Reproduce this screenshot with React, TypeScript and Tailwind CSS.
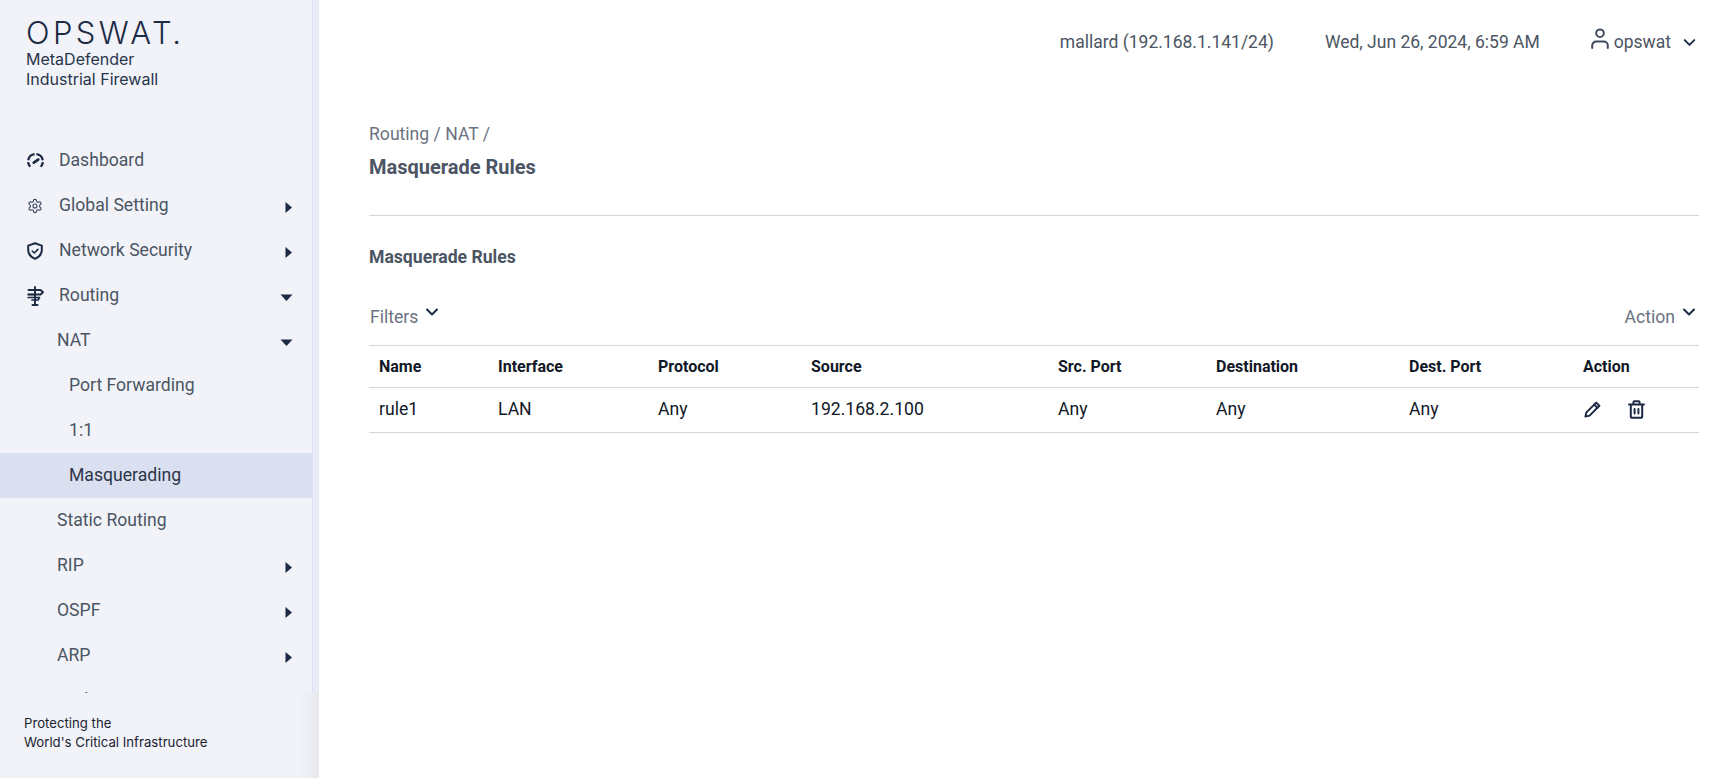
import { ChevronDown } from 'lucide-react';

const sideFont = "font-['Inter','Liberation_Sans',sans-serif]";

function CaretRight() {
    return (
        <svg width="9" height="13" viewBox="0 0 9 13" className="mt-[3px] fill-[#1d2b45]">
            <path d="M1.5 1l6.5 5.5L1.5 12z" />
        </svg>
    );
}

function CaretDown() {
    return (
        <svg width="13" height="9" viewBox="0 0 13 9" className="mt-[4px] fill-[#1d2b45]">
            <path d="M.5 1.5h12L6.5 8z" />
        </svg>
    );
}

function GaugeIcon() {
    return (
        <svg width="17" height="16" viewBox="0 0 17 16" fill="none" stroke="#1d2b45" strokeWidth="2.3">
            <path d="M3.27 13.73A7.4 7.4 0 0 1 1.13 9.14M1.21 7.2A7.4 7.4 0 0 1 7.6 1.15M9.4 1.15A7.4 7.4 0 0 1 15.79 7.2M15.87 9.14A7.4 7.4 0 0 1 13.73 13.73" />
            <path d="M6.8 9.6l4.4-3" strokeWidth="2.8" strokeLinecap="round" />
        </svg>
    );
}

function GearIcon() {
    return (
        <svg width="16" height="16" viewBox="0 0 24 24" fill="none" stroke="#3a4660" strokeWidth="1.7" strokeLinejoin="round">
            <path d="M12.2 2h-.44a2 2 0 0 0-2 2v.18a2 2 0 0 1-1 1.73l-.43.25a2 2 0 0 1-2 0l-.15-.08a2 2 0 0 0-2.73.73l-.22.38a2 2 0 0 0 .73 2.73l.15.1a2 2 0 0 1 1 1.72v.51a2 2 0 0 1-1 1.74l-.15.09a2 2 0 0 0-.73 2.73l.22.38a2 2 0 0 0 2.73.73l.15-.08a2 2 0 0 1 2 0l.43.25a2 2 0 0 1 1 1.73V20a2 2 0 0 0 2 2h.44a2 2 0 0 0 2-2v-.18a2 2 0 0 1 1-1.73l.43-.25a2 2 0 0 1 2 0l.15.08a2 2 0 0 0 2.73-.73l.22-.39a2 2 0 0 0-.73-2.73l-.15-.08a2 2 0 0 1-1-1.74v-.5a2 2 0 0 1 1-1.74l.15-.09a2 2 0 0 0 .73-2.73l-.22-.38a2 2 0 0 0-2.73-.73l-.15.08a2 2 0 0 1-2 0l-.43-.25a2 2 0 0 1-1-1.73V4a2 2 0 0 0-2-2z" />
            <circle cx="12" cy="12" r="3" />
        </svg>
    );
}

function ShieldIcon() {
    return (
        <svg width="16" height="18" viewBox="0 0 16 18" fill="none" stroke="#1d2b45" strokeWidth="2" strokeLinejoin="round" strokeLinecap="round">
            <path d="M8 1.2l6.8 2.4v5c0 3.8-2.8 6.4-6.8 8.2-4-1.8-6.8-4.4-6.8-8.2v-5z" />
            <path d="M5.2 9l2.1 2 3.6-3.6" strokeWidth="1.6" />
        </svg>
    );
}

function SignpostIcon() {
    return (
        <svg width="17" height="20" viewBox="0 0 17 20" fill="none" stroke="#1d2b45" strokeWidth="1.9" strokeLinejoin="round" strokeLinecap="round">
            <path d="M8 1v18M5.5 19h5" />
            <path d="M1.5 4h12l2.5 2.2-2.5 2.3h-12" />
            <path d="M8 8.5H1.2M1.2 11.5H12.5L11 14H5" strokeWidth="1.7" />
        </svg>
    );
}

function TrashIcon() {
    return (
        <svg width="17" height="19" viewBox="0 0 17 19" fill="none" stroke="#1d2b45" strokeWidth="2" strokeLinejoin="round" strokeLinecap="round">
            <path d="M1 4.6h15M5.4 4.4V2.2a1 1 0 0 1 1-1h4.2a1 1 0 0 1 1 1v2.2" />
            <path d="M2.8 4.8v11.4a1.6 1.6 0 0 0 1.6 1.6h8.2a1.6 1.6 0 0 0 1.6-1.6V4.8" />
            <path d="M6.6 9v4.6M10.4 9v4.6" />
        </svg>
    );
}

function PencilIcon() {
    return (
        <svg width="17" height="17" viewBox="0 0 17 17" fill="none" stroke="#1d2b45" strokeWidth="2" strokeLinejoin="round" strokeLinecap="round">
            <path d="M12.2 1.6l3.2 3.2L5.6 14.6l-4.2 1 1-4.2z" />
            <path d="M10.2 3.6l3.2 3.2" />
        </svg>
    );
}

function UserIcon() {
    return (
        <svg width="18" height="21" viewBox="0 0 18 21" fill="none" stroke="#3f4a5c" strokeWidth="2" strokeLinecap="round">
            <circle cx="9" cy="5.2" r="3.8" />
            <path d="M1.2 20v-2.4a4 4 0 0 1 4-4h7.6a4 4 0 0 1 4 4V20" />
        </svg>
    );
}

function NavRow({ label, icon, indent, caret, active }: { label: string; icon?: React.ReactNode; indent: string; caret?: 'right' | 'down'; active?: boolean }) {
    return (
        <div className={`flex h-[45px] shrink-0 items-center pr-[19px] ${indent} ${active ? 'bg-[#dae0f0] text-[#2c3549]' : 'text-[#4b5563]'}`}>
            {icon && <span className="flex w-[32px] shrink-0 items-center justify-start">{icon}</span>}
            <span className="flex-1">{label}</span>
            {caret === 'right' && <CaretRight />}
            {caret === 'down' && <CaretDown />}
        </div>
    );
}

const columns = ['Name', 'Interface', 'Protocol', 'Source', 'Src. Port', 'Destination', 'Dest. Port', 'Action'];
const row = ['rule1', 'LAN', 'Any', '192.168.2.100', 'Any', 'Any', 'Any'];
const grid = 'grid grid-cols-[119px_160px_153px_247px_158px_193px_174px_1fr] items-center px-[10px]';

export default function App() {
    return (
        <div className="flex h-[778px] w-[1730px] overflow-hidden bg-white font-['Roboto',sans-serif]">
            <aside className="flex h-full w-[319px] shrink-0 flex-col bg-[#f1f3f9]">
                <div className="h-[693px] shrink-0 overflow-hidden border-r-[6px] border-[#e9ecf7]">
                    <div className="h-full overflow-hidden border-r border-[#dfe4f5]">
                        <div className={`h-[138px] pl-[26px] pt-[17px] text-[#1d2b45] ${sideFont}`}>
                            <div className="text-[31px] font-light leading-[31px] tracking-[3.4px]">OPSWAT<span className="ml-[-3px]">.</span></div>
                            <div className="mt-[2px] text-[16px] leading-[19.5px] text-[#28354b]">MetaDefender<br />Industrial Firewall</div>
                        </div>
                        <nav className="text-[17.6px]">
                            <NavRow label="Dashboard" icon={<GaugeIcon />} indent="pl-[27px]" />
                            <NavRow label="Global Setting" icon={<GearIcon />} indent="pl-[27px]" caret="right" />
                            <NavRow label="Network Security" icon={<ShieldIcon />} indent="pl-[27px]" caret="right" />
                            <NavRow label="Routing" icon={<SignpostIcon />} indent="pl-[27px]" caret="down" />
                            <NavRow label="NAT" indent="pl-[57px]" caret="down" />
                            <NavRow label="Port Forwarding" indent="pl-[69px]" />
                            <NavRow label="1:1" indent="pl-[69px]" />
                            <NavRow label="Masquerading" indent="pl-[69px]" active />
                            <NavRow label="Static Routing" indent="pl-[57px]" />
                            <NavRow label="RIP" indent="pl-[57px]" caret="right" />
                            <NavRow label="OSPF" indent="pl-[57px]" caret="right" />
                            <NavRow label="ARP" indent="pl-[57px]" caret="right" />
                            <NavRow label="Bridging" indent="pl-[57px]" caret="right" />
                        </nav>
                    </div>
                </div>
                <div className={`flex-1 bg-gradient-to-r from-[#f1f3f9] from-[94%] to-[#e6e8ee] pl-[24px] pt-[21px] text-[13.2px] leading-[18.5px] text-[#1b2230] ${sideFont}`}>
                    Protecting the<br />World's Critical Infrastructure
                </div>
            </aside>

            <main className="flex min-w-0 flex-1 flex-col pl-[50px] pr-[31px]">
                <header className="flex h-[84px] shrink-0 items-center justify-end text-[17.5px] text-[#4b5563]">
                    <span>mallard (192.168.1.141/24)</span>
                    <span className="ml-[51px]">Wed, Jun 26, 2024, 6:59 AM</span>
                    <span className="ml-[51px] flex items-center">
                        <span className="mb-[8px]"><UserIcon /></span>
                        <span className="ml-[5px]">opswat</span>
                        <ChevronDown size={19} strokeWidth={2.4} className="ml-[9px] text-[#1d2b45]" />
                    </span>
                </header>

                <div className="mt-[38px] text-[17.6px] leading-[24px] text-[#6b7280]">Routing / NAT /</div>
                <h1 className="mt-[9px] text-[20px] font-bold leading-[24px] text-[#4b5563]">Masquerade Rules</h1>
                <div className="mt-[36px] border-t border-[#d4d6d9]" />
                <h2 className="mt-[30px] text-[17.6px] font-bold leading-[22px] text-[#4b5563]">Masquerade Rules</h2>

                <div className="mt-[37px] flex h-[40px] items-start justify-between pl-[1px] text-[17.6px] text-[#6b7280]">
                    <span className="flex items-start leading-[24px]">Filters<ChevronDown size={20} strokeWidth={2.4} className="ml-[4px] mt-[-3px] text-[#1d2b45]" /></span>
                    <span className="flex items-start leading-[24px]">Action<ChevronDown size={20} strokeWidth={2.4} className="ml-[4px] mt-[-3px] text-[#1d2b45]" /></span>
                </div>

                <div className="border-y border-[#d4d6d9]">
                    <div className={`${grid} h-[42px] border-b border-[#d4d6d9] text-[16px] font-bold text-[#111827]`}>
                        {columns.map((c) => <div key={c}>{c}</div>)}
                    </div>
                    <div className={`${grid} h-[44px] pb-[1px] text-[17.6px] text-[#111827]`}>
                        {row.map((v, i) => <div key={i}>{v}</div>)}
                        <div className="flex items-center gap-[27px] pl-[1px]">
                            <PencilIcon />
                            <TrashIcon />
                        </div>
                    </div>
                </div>
            </main>
        </div>
    );
}
